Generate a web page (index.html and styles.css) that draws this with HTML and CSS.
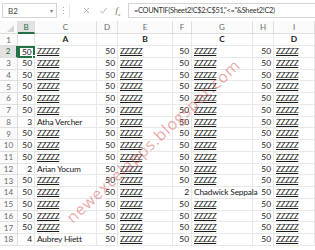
FILE: index.html
```html
<!DOCTYPE html>
<html>
<head>
<meta charset="utf-8">
<link rel="stylesheet" href="styles.css">
</head>
<body>
<div class="app">
  <div class="fbar">
    <div class="namebox"><span>B2</span><span class="dd">&#9662;</span></div>
    <div class="grip"><i></i><i></i><i></i></div>
    <div class="btns">
      <svg class="ic" viewBox="0 0 10 10" width="9" height="9"><path d="M2 2L8 8M8 2L2 8" stroke="#b5b5b5" stroke-width="1.1"/></svg>
      <svg class="ic" viewBox="0 0 10 10" width="9" height="9"><path d="M1.5 5.5L4 8L8.5 2" stroke="#b5b5b5" stroke-width="1.1" fill="none"/></svg>
      <span class="fx">f<sub>x</sub></span>
    </div>
    <div class="formula">=COUNTIF(Sheet2!C$2:C$51,"&lt;="&amp;Sheet2!C2)</div>
  </div>
  <div class="grid">
    <div class="corner"><span class="tri"></span></div>
    <div class="hd sel">B</div><div class="hd">C</div><div class="hd">D</div><div class="hd">E</div><div class="hd">F</div><div class="hd">G</div><div class="hd">H</div><div class="hd">I</div>

    <div class="rh">1</div><div class="c"></div><div class="c b1">A</div><div class="c"></div><div class="c b1">B</div><div class="c"></div><div class="c b1">C</div><div class="c"></div><div class="c b1">D</div>

    <div class="rh sel">2</div><div class="c n active">50<span class="handle"></span></div><div class="c z">ZZZZZ</div><div class="c n">50</div><div class="c z">ZZZZZ</div><div class="c n">50</div><div class="c z">ZZZZZ</div><div class="c n">50</div><div class="c z">ZZZZZ</div>
    <div class="rh">3</div><div class="c n">50</div><div class="c z">ZZZZZ</div><div class="c n">50</div><div class="c z">ZZZZZ</div><div class="c n">50</div><div class="c z">ZZZZZ</div><div class="c n">50</div><div class="c z">ZZZZZ</div>
    <div class="rh">4</div><div class="c n">50</div><div class="c z">ZZZZZ</div><div class="c n">50</div><div class="c z">ZZZZZ</div><div class="c n">50</div><div class="c z">ZZZZZ</div><div class="c n">50</div><div class="c z">ZZZZZ</div>
    <div class="rh">5</div><div class="c n">50</div><div class="c z">ZZZZZ</div><div class="c n">50</div><div class="c z">ZZZZZ</div><div class="c n">50</div><div class="c z">ZZZZZ</div><div class="c n">50</div><div class="c z">ZZZZZ</div>
    <div class="rh">6</div><div class="c n">50</div><div class="c z">ZZZZZ</div><div class="c n">50</div><div class="c z">ZZZZZ</div><div class="c n">50</div><div class="c z">ZZZZZ</div><div class="c n">50</div><div class="c z">ZZZZZ</div>
    <div class="rh">7</div><div class="c n">50</div><div class="c z">ZZZZZ</div><div class="c n">50</div><div class="c z">ZZZZZ</div><div class="c n">50</div><div class="c z">ZZZZZ</div><div class="c n">50</div><div class="c z">ZZZZZ</div>
    <div class="rh">8</div><div class="c n">3</div><div class="c t">Atha Vercher</div><div class="c n">50</div><div class="c z">ZZZZZ</div><div class="c n">50</div><div class="c z">ZZZZZ</div><div class="c n">50</div><div class="c z">ZZZZZ</div>
    <div class="rh">9</div><div class="c n">50</div><div class="c z">ZZZZZ</div><div class="c n">50</div><div class="c z">ZZZZZ</div><div class="c n">50</div><div class="c z">ZZZZZ</div><div class="c n">50</div><div class="c z">ZZZZZ</div>
    <div class="rh">10</div><div class="c n">50</div><div class="c z">ZZZZZ</div><div class="c n">50</div><div class="c z">ZZZZZ</div><div class="c n">50</div><div class="c z">ZZZZZ</div><div class="c n">50</div><div class="c z">ZZZZZ</div>
    <div class="rh">11</div><div class="c n">50</div><div class="c z">ZZZZZ</div><div class="c n">50</div><div class="c z">ZZZZZ</div><div class="c n">50</div><div class="c z">ZZZZZ</div><div class="c n">50</div><div class="c z">ZZZZZ</div>
    <div class="rh">12</div><div class="c n">2</div><div class="c t">Arian Yocum</div><div class="c n">50</div><div class="c z">ZZZZZ</div><div class="c n">50</div><div class="c z">ZZZZZ</div><div class="c n">50</div><div class="c z">ZZZZZ</div>
    <div class="rh">13</div><div class="c n">50</div><div class="c z">ZZZZZ</div><div class="c n">50</div><div class="c z">ZZZZZ</div><div class="c n">50</div><div class="c z">ZZZZZ</div><div class="c n">50</div><div class="c z">ZZZZZ</div>
    <div class="rh">14</div><div class="c n">50</div><div class="c z">ZZZZZ</div><div class="c n">50</div><div class="c z">ZZZZZ</div><div class="c n">2</div><div class="c t">Chadwick Seppala</div><div class="c n">50</div><div class="c z">ZZZZZ</div>
    <div class="rh">15</div><div class="c n">50</div><div class="c z">ZZZZZ</div><div class="c n">50</div><div class="c z">ZZZZZ</div><div class="c n">50</div><div class="c z">ZZZZZ</div><div class="c n">50</div><div class="c z">ZZZZZ</div>
    <div class="rh">16</div><div class="c n">50</div><div class="c z">ZZZZZ</div><div class="c n">50</div><div class="c z">ZZZZZ</div><div class="c n">50</div><div class="c z">ZZZZZ</div><div class="c n">50</div><div class="c z">ZZZZZ</div>
    <div class="rh">17</div><div class="c n">50</div><div class="c z">ZZZZZ</div><div class="c n">50</div><div class="c z">ZZZZZ</div><div class="c n">50</div><div class="c z">ZZZZZ</div><div class="c n">50</div><div class="c z">ZZZZZ</div>
    <div class="rh">18</div><div class="c n">4</div><div class="c t">Aubrey Hiett</div><div class="c n">50</div><div class="c z">ZZZZZ</div><div class="c n">50</div><div class="c z">ZZZZZ</div><div class="c n">50</div><div class="c z">ZZZZZ</div>
  </div>
  <div class="watermark">newexcelapps.blogspot.com</div>
</div>
</body>
</html>
```
FILE: styles.css
```css
* { box-sizing: border-box; }
html, body { margin: 0; padding: 0; background: #fff; }
body { font-family: Lato, "Open Sans", sans-serif; color: #222; }
.app { position: relative; width: 315px; height: 250px; overflow: hidden; background: #fff; }

.fbar { height: 21px; display: flex; align-items: center; padding: 0 0 0 2px; }
.namebox { width: 55px; height: 15px; border: 1px solid #d4d4d4; display: flex; align-items: center; justify-content: space-between; padding: 0 3px 0 5px; font-size: 8px; color: #444; }
.namebox .dd { font-size: 6px; color: #777; }
.grip { width: 12px; display: flex; flex-direction: column; align-items: center; gap: 2px; }
.grip i { display: block; width: 1px; height: 1px; background: #aaa; }
.btns { width: 59px; height: 15px; display: flex; align-items: center; justify-content: space-around; padding: 0 4px 0 8px; border-left: 1px solid #e8e8e8; }
.fx { font-family: "Liberation Serif", serif; font-style: italic; font-size: 9px; color: #666; }
.fx sub { font-size: 5px; }
.formula { flex: 1; height: 15px; border: 1px solid #d4d4d4; border-right: none; padding-left: 5px; font-size: 7.4px; letter-spacing: -0.3px; line-height: 13px; color: #333; white-space: nowrap; overflow: hidden; }

.grid { display: grid; grid-template-columns: 18px 17px 62px 21px 55px 19px 61px 21px 1fr; grid-template-rows: 13px 12px repeat(17, 11.75px) 12px; }
.corner, .hd, .rh { background: #fbfbfb; color: #6a6a6a; font-size: 8px; display: flex; align-items: center; justify-content: center; border-right: 1px solid #dedede; border-bottom: 1px solid #dedede; }
.tri { width: 0; height: 0; border-left: 7px solid transparent; border-bottom: 7px solid #d6d6d6; margin: 3px 0 0 4px; }
.hd.sel { background: #e2e2e2; color: #1e6e3c; border-bottom: 2px solid #217346; }
.rh.sel { background: #e2e2e2; color: #1e6e3c; border-right: 2px solid #217346; }
.c { position: relative; border-right: 1px solid #e8e8e8; border-bottom: 1px solid #e8e8e8; font-size: 8.4px; line-height: 11px; white-space: nowrap; padding: 0 2px; color: #1a1a1a; }
.n { text-align: right; }
.z { text-decoration: underline; text-underline-offset: 1px; letter-spacing: -0.6px; }
.t { overflow: visible; z-index: 1; letter-spacing: -0.2px; }
.b1 { font-weight: bold; text-align: center; }
.active { border: 2px solid #217346; line-height: 8px; }
.handle { position: absolute; right: -3px; bottom: -3px; width: 4px; height: 4px; background: #217346; border: 1px solid #fff; z-index: 2; }

.watermark { position: absolute; left: 153px; top: 141px; transform: translate(-50%, -50%) rotate(-43deg); font-size: 16px; letter-spacing: 0.8px; color: rgba(215, 95, 95, 0.55); white-space: nowrap; pointer-events: none; font-family: "Open Sans", sans-serif; }
```
